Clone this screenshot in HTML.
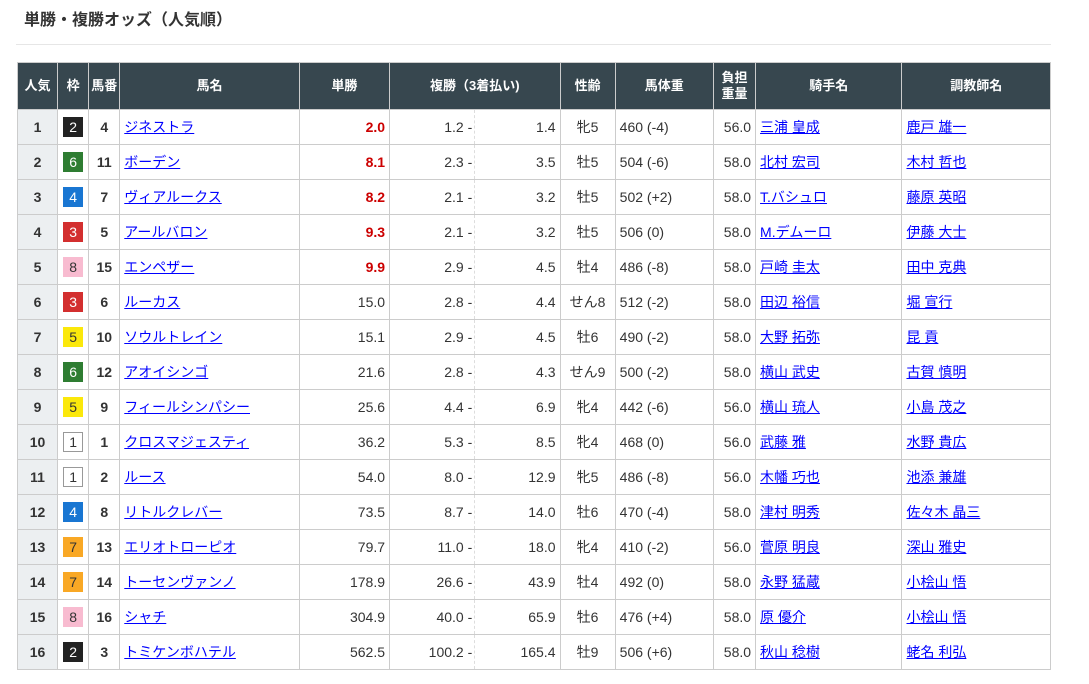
<!DOCTYPE html>
<html><head><meta charset="utf-8"><style>
body{margin:0;background:#fff;font-family:"Liberation Sans","Noto Sans CJK JP",sans-serif;color:#333;}
h2{position:absolute;left:24px;top:6px;margin:0;font-size:16px;font-weight:bold;color:#333;}
.hr{position:absolute;left:16px;top:44px;width:1035px;height:1px;background:#e6e6e6;}
table{position:absolute;left:17px;top:62px;border-collapse:collapse;table-layout:fixed;width:1034px;font-size:14px;}
th{background:#37474f;color:#fff;font-size:13px;font-weight:bold;height:46px;border:1px solid #ccc;padding:0;line-height:16px;}
td{height:34px;border:1px solid #ccc;padding:0 4px;white-space:nowrap;}
td.p{background:#eceff1;text-align:center;font-weight:bold;}
td.c{text-align:center;}
td.b{text-align:center;font-weight:bold;}
td.r{text-align:right;}
td.o{text-align:right;color:#c00;font-weight:bold;}
a{color:#00f;text-decoration:underline;}
.w{display:inline-block;width:20px;height:20px;line-height:20px;text-align:center;color:#fff;font-size:14px;}
.f1{background:#fff;color:#333;border:1px solid #999;width:18px;height:18px;line-height:18px}
.f2{background:#222}.f3{background:#d32f2f}.f4{background:#1976d2}.f5{background:#fbe80b;color:#333}.f6{background:#2e7d32}.f7{background:#f9a825;color:#333}.f8{background:#f8bbd0;color:#333}
td.fa{text-align:right;border-right:1px dashed #ddd;padding-right:2px}
td.fb{text-align:right;border-left:none;padding-right:4px}
</style></head><body>
<h2>単勝・複勝オッズ（人気順）</h2>
<div class="hr"></div>
<table>
<colgroup><col style="width:40px"><col style="width:31px"><col style="width:31px"><col style="width:179px"><col style="width:90px"><col style="width:85px"><col style="width:85px"><col style="width:55px"><col style="width:98px"><col style="width:42px"><col style="width:146px"><col style="width:148px"></colgroup>
<tr><th>人気</th><th>枠</th><th>馬番</th><th>馬名</th><th>単勝</th><th colspan="2">複勝（3着払い)</th><th>性齢</th><th>馬体重</th><th>負担<br>重量</th><th>騎手名</th><th>調教師名</th></tr>
<tr><td class="p">1</td><td class="c"><span class="w f2">2</span></td><td class="b">4</td><td><a>ジネストラ</a></td><td class="o">2.0</td><td class="fa">1.2 -</td><td class="fb">1.4</td><td class="c">牝5</td><td>460 (-4)</td><td class="r">56.0</td><td><a>三浦 皇成</a></td><td><a>鹿戸 雄一</a></td></tr>
<tr><td class="p">2</td><td class="c"><span class="w f6">6</span></td><td class="b">11</td><td><a>ボーデン</a></td><td class="o">8.1</td><td class="fa">2.3 -</td><td class="fb">3.5</td><td class="c">牡5</td><td>504 (-6)</td><td class="r">58.0</td><td><a>北村 宏司</a></td><td><a>木村 哲也</a></td></tr>
<tr><td class="p">3</td><td class="c"><span class="w f4">4</span></td><td class="b">7</td><td><a>ヴィアルークス</a></td><td class="o">8.2</td><td class="fa">2.1 -</td><td class="fb">3.2</td><td class="c">牡5</td><td>502 (+2)</td><td class="r">58.0</td><td><a>T.バシュロ</a></td><td><a>藤原 英昭</a></td></tr>
<tr><td class="p">4</td><td class="c"><span class="w f3">3</span></td><td class="b">5</td><td><a>アールバロン</a></td><td class="o">9.3</td><td class="fa">2.1 -</td><td class="fb">3.2</td><td class="c">牡5</td><td>506 (0)</td><td class="r">58.0</td><td><a>M.デムーロ</a></td><td><a>伊藤 大士</a></td></tr>
<tr><td class="p">5</td><td class="c"><span class="w f8">8</span></td><td class="b">15</td><td><a>エンペザー</a></td><td class="o">9.9</td><td class="fa">2.9 -</td><td class="fb">4.5</td><td class="c">牡4</td><td>486 (-8)</td><td class="r">58.0</td><td><a>戸崎 圭太</a></td><td><a>田中 克典</a></td></tr>
<tr><td class="p">6</td><td class="c"><span class="w f3">3</span></td><td class="b">6</td><td><a>ルーカス</a></td><td class="r">15.0</td><td class="fa">2.8 -</td><td class="fb">4.4</td><td class="c">せん8</td><td>512 (-2)</td><td class="r">58.0</td><td><a>田辺 裕信</a></td><td><a>堀 宣行</a></td></tr>
<tr><td class="p">7</td><td class="c"><span class="w f5">5</span></td><td class="b">10</td><td><a>ソウルトレイン</a></td><td class="r">15.1</td><td class="fa">2.9 -</td><td class="fb">4.5</td><td class="c">牡6</td><td>490 (-2)</td><td class="r">58.0</td><td><a>大野 拓弥</a></td><td><a>昆 貢</a></td></tr>
<tr><td class="p">8</td><td class="c"><span class="w f6">6</span></td><td class="b">12</td><td><a>アオイシンゴ</a></td><td class="r">21.6</td><td class="fa">2.8 -</td><td class="fb">4.3</td><td class="c">せん9</td><td>500 (-2)</td><td class="r">58.0</td><td><a>横山 武史</a></td><td><a>古賀 慎明</a></td></tr>
<tr><td class="p">9</td><td class="c"><span class="w f5">5</span></td><td class="b">9</td><td><a>フィールシンパシー</a></td><td class="r">25.6</td><td class="fa">4.4 -</td><td class="fb">6.9</td><td class="c">牝4</td><td>442 (-6)</td><td class="r">56.0</td><td><a>横山 琉人</a></td><td><a>小島 茂之</a></td></tr>
<tr><td class="p">10</td><td class="c"><span class="w f1">1</span></td><td class="b">1</td><td><a>クロスマジェスティ</a></td><td class="r">36.2</td><td class="fa">5.3 -</td><td class="fb">8.5</td><td class="c">牝4</td><td>468 (0)</td><td class="r">56.0</td><td><a>武藤 雅</a></td><td><a>水野 貴広</a></td></tr>
<tr><td class="p">11</td><td class="c"><span class="w f1">1</span></td><td class="b">2</td><td><a>ルース</a></td><td class="r">54.0</td><td class="fa">8.0 -</td><td class="fb">12.9</td><td class="c">牝5</td><td>486 (-8)</td><td class="r">56.0</td><td><a>木幡 巧也</a></td><td><a>池添 兼雄</a></td></tr>
<tr><td class="p">12</td><td class="c"><span class="w f4">4</span></td><td class="b">8</td><td><a>リトルクレバー</a></td><td class="r">73.5</td><td class="fa">8.7 -</td><td class="fb">14.0</td><td class="c">牡6</td><td>470 (-4)</td><td class="r">58.0</td><td><a>津村 明秀</a></td><td><a>佐々木 晶三</a></td></tr>
<tr><td class="p">13</td><td class="c"><span class="w f7">7</span></td><td class="b">13</td><td><a>エリオトローピオ</a></td><td class="r">79.7</td><td class="fa">11.0 -</td><td class="fb">18.0</td><td class="c">牝4</td><td>410 (-2)</td><td class="r">56.0</td><td><a>菅原 明良</a></td><td><a>深山 雅史</a></td></tr>
<tr><td class="p">14</td><td class="c"><span class="w f7">7</span></td><td class="b">14</td><td><a>トーセンヴァンノ</a></td><td class="r">178.9</td><td class="fa">26.6 -</td><td class="fb">43.9</td><td class="c">牡4</td><td>492 (0)</td><td class="r">58.0</td><td><a>永野 猛蔵</a></td><td><a>小桧山 悟</a></td></tr>
<tr><td class="p">15</td><td class="c"><span class="w f8">8</span></td><td class="b">16</td><td><a>シャチ</a></td><td class="r">304.9</td><td class="fa">40.0 -</td><td class="fb">65.9</td><td class="c">牡6</td><td>476 (+4)</td><td class="r">58.0</td><td><a>原 優介</a></td><td><a>小桧山 悟</a></td></tr>
<tr><td class="p">16</td><td class="c"><span class="w f2">2</span></td><td class="b">3</td><td><a>トミケンボハテル</a></td><td class="r">562.5</td><td class="fa">100.2 -</td><td class="fb">165.4</td><td class="c">牡9</td><td>506 (+6)</td><td class="r">58.0</td><td><a>秋山 稔樹</a></td><td><a>蛯名 利弘</a></td></tr>
</table>
</body></html>
